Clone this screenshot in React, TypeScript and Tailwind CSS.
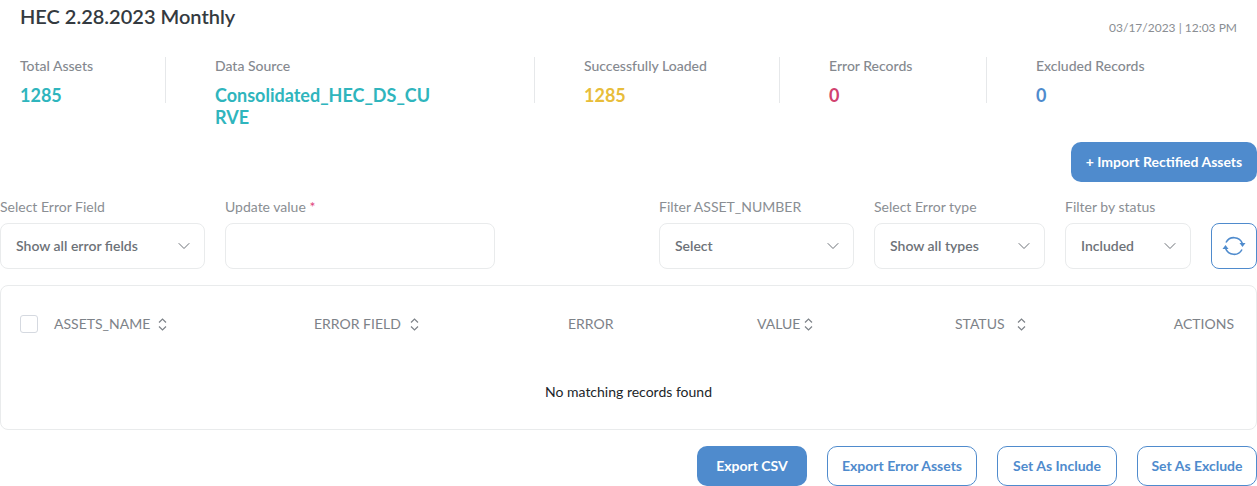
import { ChevronDown } from "lucide-react";

const stats = [
  { label: "Total Assets", value: "1285", color: "text-[#2fb5bd]", width: "w-[146px]", divider: true },
  { label: "Data Source", value: "Consolidated_HEC_DS_CURVE", color: "text-[#2fb5bd]", width: "w-[369px]", divider: true },
  { label: "Successfully Loaded", value: "1285", color: "text-[#e8bd3a]", width: "w-[245px]", divider: true },
  { label: "Error Records", value: "0", color: "text-[#d1416f]", width: "w-[207px]", divider: true },
  { label: "Excluded Records", value: "0", color: "text-[#4f8bcd]", width: "w-[220px]", divider: false },
];

function SortIcon() {
  return (
    <svg width="9" height="13" viewBox="0 0 9 13" fill="none" stroke="#7d8288" strokeWidth="1.2">
      <path d="M1 4.5 L4.5 1 L8 4.5" />
      <path d="M1 8.5 L4.5 12 L8 8.5" />
    </svg>
  );
}

function Select({ label, value, className }: { label: string; value: string; className: string }) {
  return (
    <div className={className}>
      <label className="block text-sm leading-[17px] text-[#8a8e93] mb-2">{label}</label>
      <div className="h-[46px] flex items-center justify-between pl-[15px] pr-[10px] bg-white border border-[#e9ebec] rounded-lg">
        <span className="text-sm font-semibold text-[#6d7278]">{value}</span>
        <ChevronDown size={20} strokeWidth={1.2} className="text-[#6d7278]" />
      </div>
    </div>
  );
}

function OutlineButton({ children, className }: { children: string; className: string }) {
  return (
    <button className={`h-10 border border-[#4f8bcd] rounded-[10px] bg-white text-sm font-bold text-[#4f8bcd] ${className}`}>
      {children}
    </button>
  );
}

export default function App() {
  return (
    <div className="w-[1257px] h-[486px] overflow-hidden bg-white font-['Lato',sans-serif]">
      {/* Title */}
      <div className="flex justify-between px-5 h-[48px]">
        <h1 className="text-xl leading-6 font-semibold text-[#343a40] mt-1">HEC 2.28.2023 Monthly</h1>
        <span className="text-xs text-[#8a8e93] mt-5 leading-[15px]">03/17/2023 | 12:03 PM</span>
      </div>

      {/* Stats */}
      <div className="flex pl-5 pt-[9px] h-[94px]">
        {stats.map((s, i) => (
          <div key={s.label} className={`${s.width} h-[46px] shrink-0 ${s.divider ? "border-r border-[#e6e8ea]" : ""} ${i > 0 ? "pl-[49px]" : ""}`}>
            <div className="text-sm leading-[17px] font-medium text-[#85898f]">{s.label}</div>
            <div className={`mt-[10px] text-lg leading-[22px] font-bold break-all w-[220px] ${s.color}`}>{s.value}</div>
          </div>
        ))}
      </div>

      {/* Import */}
      <div className="flex justify-end">
        <button className="w-[186px] h-10 bg-[#4f8bcd] rounded-[10px] text-sm font-bold text-white">+ Import Rectified Assets</button>
      </div>

      {/* Filters */}
      <div className="flex items-end mt-4">
        <Select label="Select Error Field" value="Show all error fields" className="w-[205px] mr-5" />
        <div className="w-[270px] mr-[164px]">
          <label className="block text-sm leading-[17px] text-[#8a8e93] mb-2">
            Update value <span className="text-[#e0457b]">*</span>
          </label>
          <input className="w-full h-[46px] bg-white border border-[#e9ebec] rounded-lg" />
        </div>
        <Select label="Filter ASSET_NUMBER" value="Select" className="w-[195px] mr-5" />
        <Select label="Select Error type" value="Show all types" className="w-[171px] mr-5" />
        <Select label="Filter by status" value="Included" className="w-[126px] mr-5" />
        <button className="w-[46px] h-[46px] flex items-center justify-center border border-[#4f8bcd] rounded-lg bg-white">
          <svg width="24" height="24" viewBox="0 0 24 24" fill="none">
            <path d="M4 8.5 A9 9 0 0 1 20.4 9.5" stroke="#4f8bcd" strokeWidth="1.6" />
            <path d="M20 15.5 A9 9 0 0 1 3.6 14.5" stroke="#4f8bcd" strokeWidth="1.6" />
            <path d="M17.5 9 L23.5 9 L20.5 13 Z" fill="#4f8bcd" />
            <path d="M0.5 15 L6.5 15 L3.5 11 Z" fill="#4f8bcd" />
          </svg>
        </button>
      </div>

      {/* Table */}
      <div className="mt-4 h-[145px] border border-[#e9ebec] rounded-lg bg-white">
        <div className="flex items-center h-[76px] text-sm text-[#7d8288] pl-[19px] pr-[22px]">
          <span className="w-[18px] h-[18px] border border-[#d5d9e0] rounded-[3px] mr-[16px] shrink-0" />
          <div className="w-[260px] flex items-center gap-2">ASSETS_NAME <SortIcon /></div>
          <div className="w-[254px] flex items-center gap-[9px]">ERROR FIELD <SortIcon /></div>
          <div className="w-[189px]">ERROR</div>
          <div className="w-[198px] flex items-center gap-1">VALUE <SortIcon /></div>
          <div className="flex items-center gap-3">STATUS <SortIcon /></div>
          <div className="ml-auto">ACTIONS</div>
        </div>
        <div className="text-center text-sm leading-[17px] text-[#212529] pt-[21px]">No matching records found</div>
      </div>

      {/* Footer actions */}
      <div className="flex justify-end gap-5 mt-4">
        <button className="w-[110px] h-10 bg-[#4f8bcd] rounded-[10px] text-sm font-bold text-white">Export CSV</button>
        <OutlineButton className="w-[150px]">Export Error Assets</OutlineButton>
        <OutlineButton className="w-[120px]">Set As Include</OutlineButton>
        <OutlineButton className="w-[120px]">Set As Exclude</OutlineButton>
      </div>
    </div>
  );
}
